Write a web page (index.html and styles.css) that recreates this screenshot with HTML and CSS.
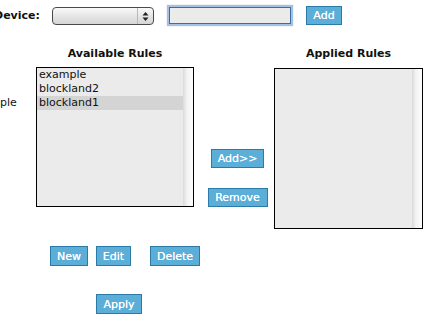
FILE: index.html
```html
<!DOCTYPE html>
<html lang="en">
<head>
  <meta charset="UTF-8">
  <title>Device Rules</title>
  <link rel="stylesheet" href="styles.css">
</head>
<body>
  <div class="toolbar">
    <label class="device-label">Device:</label>
    <div class="select">
      <span class="select-arrows">
        <svg width="7" height="11" viewBox="0 0 7 11"><path d="M3.5 1 L6.5 4.5 L0.5 4.5 Z M3.5 10 L6.5 6.5 L0.5 6.5 Z" fill="#222"/></svg>
      </span>
    </div>
    <input type="text" class="device-input">
    <button class="btn btn-add">Add</button>
  </div>

  <div class="rules">
    <div class="side-label">ple</div>

    <div class="rule-col left">
      <div class="rule-title">Available Rules</div>
      <div class="listbox">
        <div class="items">
          <div class="item">example</div>
          <div class="item">blockland2</div>
          <div class="item selected">blockland1</div>
        </div>
        <div class="scroll"></div>
      </div>
    </div>

    <div class="move-col">
      <button class="btn btn-move">Add&gt;&gt;</button>
      <button class="btn btn-remove">Remove</button>
    </div>

    <div class="rule-col right">
      <div class="rule-title">Applied Rules</div>
      <div class="listbox tall">
        <div class="items"></div>
        <div class="scroll"></div>
      </div>
    </div>
  </div>

  <div class="actions">
    <button class="btn btn-new">New</button>
    <button class="btn btn-edit">Edit</button>
    <button class="btn btn-delete">Delete</button>
  </div>

  <div class="apply-row">
    <button class="btn btn-apply">Apply</button>
  </div>
</body>
</html>
```

FILE: styles.css
```css
body {
  margin: 0;
  background: #fff;
  font-family: "DejaVu Sans", Verdana, sans-serif;
  font-size: 11px;
  color: #111;
  overflow: hidden;
}

.toolbar {
  display: flex;
  align-items: flex-start;
  padding-top: 6px;
  height: 19px;
}

.device-label {
  width: 58px;
  margin-left: -6px;
  font-weight: bold;
  line-height: 14px;
  padding-top: 3px;
}

.select {
  width: 102px;
  height: 18px;
  margin-top: 1px;
  box-sizing: border-box;
  border: 1px solid #4a4a4a;
  border-radius: 4px;
  background: linear-gradient(#fafafa, #e2e2e2 60%, #d6d6d6);
  display: flex;
  justify-content: flex-end;
}

.select-arrows {
  width: 15px;
  border-left: 1px solid #b8b8b8;
  display: flex;
  align-items: center;
  justify-content: center;
}

.device-input {
  width: 122px;
  height: 17px;
  margin: 1px 0 0 15px;
  box-sizing: border-box;
  border: 1px solid #3f6e9c;
  background: #ebebeb;
  box-shadow: 0 0 1px 2px rgba(125, 165, 215, 0.7);
  outline: none;
  padding: 0;
}

.btn {
  font-family: "DejaVu Sans", Verdana, sans-serif;
  font-size: 11px;
  color: #fff;
  text-shadow: 0 0 0.6px #fff;
  background: #5aaed8;
  border: 1px solid #2c7aa8;
  padding: 0;
  height: 19px;
  box-sizing: border-box;
  cursor: pointer;
}

.btn-add {
  width: 36px;
  margin-left: 15px;
}

.rules {
  display: flex;
  margin-top: 20px;
}

.side-label {
  width: 36px;
  padding-top: 51px;
  line-height: 14px;
}

.rule-col {
  display: flex;
  flex-direction: column;
}

.rule-col.left {
  width: 158px;
}

.rule-col.right {
  width: 149px;
}

.rule-title {
  height: 22px;
  padding-top: 2px;
  box-sizing: border-box;
  line-height: 14px;
  font-weight: bold;
  text-align: center;
}

.listbox {
  height: 140px;
  box-sizing: border-box;
  border: 1px solid #000;
  background: #ebebeb;
  display: flex;
}

.listbox.tall {
  height: 161px;
  margin-top: 1px;
}

.items {
  flex: 1;
}

.item {
  height: 14px;
  line-height: 14px;
  padding-left: 2px;
}

.item.selected {
  background: #d4d4d4;
}

.scroll {
  width: 10px;
  background: linear-gradient(to right, #dadada, #f3f3f3 40%, #fdfdfd);
}

.move-col {
  width: 80px;
  display: flex;
  flex-direction: column;
  align-items: center;
  padding-top: 104px;
  padding-left: 7px;
  box-sizing: border-box;
}

.btn-move {
  width: 53px;
}

.btn-remove {
  width: 60px;
  margin-top: 20px;
}

.actions {
  display: flex;
  margin-top: 17px;
  padding-left: 50px;
}

.actions .btn {
  height: 20px;
}

.btn-new {
  width: 38px;
}

.btn-edit {
  width: 35px;
  margin-left: 8px;
}

.btn-delete {
  width: 50px;
  margin-left: 19px;
}

.apply-row {
  margin-top: 28px;
  padding-left: 96px;
}

.btn-apply {
  width: 46px;
  height: 20px;
}
```
